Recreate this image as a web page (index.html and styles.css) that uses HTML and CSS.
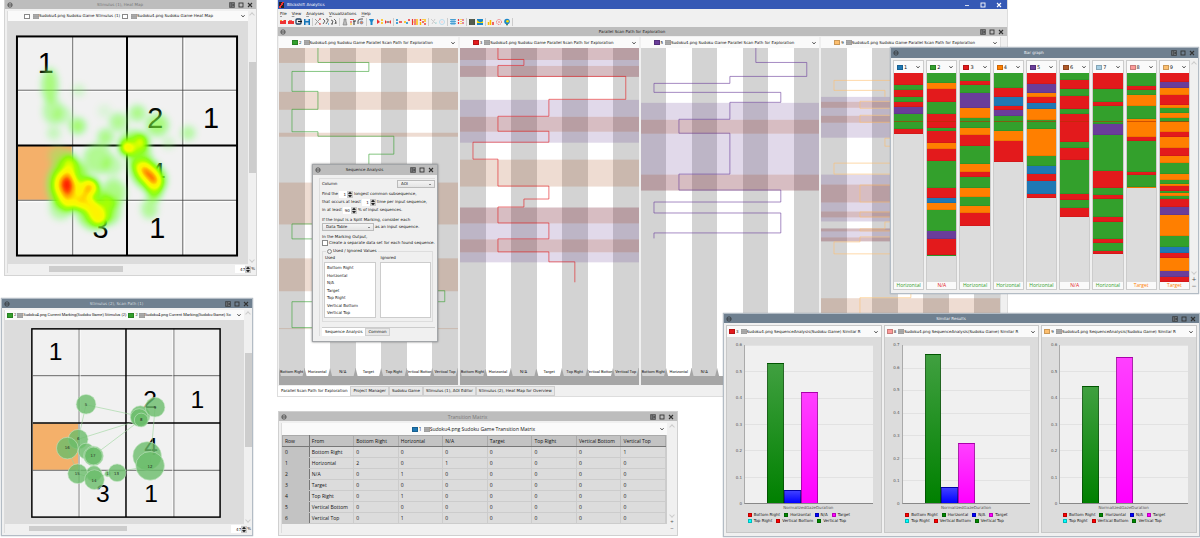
FILE: index.html
```html
<!DOCTYPE html>
<html lang="en">
<head>
<meta charset="utf-8">
<title>Blickshift Analytics</title>
<link rel="stylesheet" href="styles.css">
</head>
<body>
<svg class="defs" aria-hidden="true">
  <defs>
    <symbol id="i-menu" viewBox="0 0 6 6"><circle cx="3" cy="3" r="2.2" fill="none" stroke="currentColor" stroke-width=".6"/><path d="M1 3h4" stroke="currentColor" stroke-width=".7"/></symbol>
    <symbol id="i-pin" viewBox="0 0 6 6"><rect x=".2" y=".2" width="5.6" height="5.6" fill="currentColor" opacity=".8"/><path d="M1.8 1.2v3.6M3.2 1.500h1.600M3.200 3h1M3.200 4.500h1.600" stroke="#b4b9bf" stroke-width=".5"/></symbol>
    <symbol id="i-max" viewBox="0 0 6 6"><rect x="1" y="1" width="4" height="4" fill="none" stroke="currentColor" stroke-width=".9"/></symbol>
    <symbol id="i-close" viewBox="0 0 6 6"><path d="M1 1l4 4M5 1L1 5" stroke="currentColor" stroke-width="1.1"/></symbol>
    <symbol id="i-min" viewBox="0 0 6 6"><path d="M1 3.5h4" stroke="currentColor" stroke-width=".8"/></symbol>
    <symbol id="i-down" viewBox="0 0 6 6"><path d="M1.4 2.2L3 3.9l1.6-1.7" fill="none" stroke="currentColor" stroke-width=".9"/></symbol>
    <symbol id="i-data" viewBox="0 0 6 5"><rect width="6" height="5" fill="#9a9a9a"/><path d="M0 1.6h6M0 3.3h6M2 0v5M4 0v5" stroke="#bdbdbd" stroke-width=".4"/></symbol>
    <symbol id="i-spin" viewBox="0 0 6 7"><rect width="6" height="7" fill="#c9c9c9"/><path d="M3 .5L5 3H1zM3 6.5L1 4h4z" fill="#222"/></symbol>
  </defs>
</svg>

<main class="desktop">

  <section class="window main-window" aria-label="Blickshift Analytics">
    <header class="app-title"><span class="app-logo"></span><span class="grow">Blickshift Analytics</span>
      <button aria-label="Minimize"><svg><use href="#i-min"/></svg></button><button aria-label="Maximize"><svg><use href="#i-max"/></svg></button><button aria-label="Close"><svg><use href="#i-close"/></svg></button>
    </header>
    <nav class="menu"><button><u>F</u>ile</button><button><u>V</u>iew</button><button><u>A</u>nalyses</button><button><u>V</u>isualizations</button><button><u>H</u>elp</button></nav>
    <div class="toolbar" id="toolbar"></div>
    <header class="dock-title" data-title="Parallel Scan Path for Exploration"></header>
    <div class="lanes"><div class="lane-row" id="lanes"></div><div class="lane-gutter"></div></div>
    <nav class="doc-tabs"><button class="active">Parallel Scan Path for Exploration</button><button>Project Manager</button><button>Sudoku Game</button><button>Stimulus (1), AOI Editor</button><button>Stimulus (2), Heat Map for Overview</button></nav>
  </section>

  <section class="window heat-window">
    <header class="dock-title dim" data-title="Stimulus (1), Heat Map"></header>
    <div class="view">
      <div class="view-body">
        <div class="source center"><i class="swatch empty"></i><svg class="data"><use href="#i-data"/></svg><span>Sudoku4.png Sudoku Game Stimulus (1)</span><i class="swatch empty"></i><svg class="data"><use href="#i-data"/></svg><span>Sudoku4.png Sudoku Game Heat Map</span><button class="drop" aria-label="Data sources"><svg><use href="#i-down"/></svg></button></div>
        <svg class="canvas" viewBox="7 23 241 241">
          <defs><filter id="heat" filterUnits="userSpaceOnUse" x="7" y="23" width="241" height="241" color-interpolation-filters="sRGB">
            <feGaussianBlur stdDeviation="4"/>
            <feColorMatrix values="0 0 0 1 0  0 0 0 1 0  0 0 0 1 0  0 0 0 1 0"/>
            <feComponentTransfer>
              <feFuncR type="table" tableValues=".45 .48 .5 .5 .66 .95 1 1 1"/>
              <feFuncG type="table" tableValues="1 1 1 1 1 1 .95 .6 0"/>
              <feFuncB type="table" tableValues=".4 .35 .2 0 0 0 0 0 0"/>
              <feFuncA type="table" tableValues="0 .38 .65 .88 1 1 1 1 1"/>
            </feComponentTransfer></filter></defs>
          <rect x="16" y="37" width="221" height="220" fill="#f1f1f1"/>
          <rect x="17" y="147" width="54" height="54" fill="#f4b06a"/>
          <path d="M73 37v220M184 37v220M17 92h220M17 203h220" stroke="#fff"/>
          <path d="M72 37v220M182.500 37v220M17 91h220M17 201.500h220" stroke="#444" stroke-width=".8"/>
          <path d="M126.500 37v220M17 146.500h220" stroke="#000" stroke-width="2"/>
          <rect x="16" y="37" width="221" height="220" fill="none" stroke="#000" stroke-width="2"/>
          <g class="digits large"><text x="45" y="74">1</text><text x="155" y="129">2</text><text x="211" y="129">1</text><text x="157" y="184">4</text><text x="100" y="239">3</text><text x="157" y="239">1</text></g>
          <g filter="url(#heat)">
            <ellipse cx="49" cy="86" rx="8" ry="17" opacity=".24"/><ellipse cx="52" cy="112" rx="10" ry="13" opacity=".17"/><circle cx="62" cy="116" r="9" opacity=".12"/>
            <circle cx="78" cy="91" r="6" opacity=".1"/><circle cx="77" cy="127" r="8" opacity=".26"/><circle cx="53" cy="134" r="7" opacity=".12"/>
            <circle cx="104" cy="112" r="7" opacity=".06"/><circle cx="118" cy="123" r="9" opacity=".2"/><circle cx="105" cy="138" r="8" opacity=".22"/><ellipse cx="97" cy="160" rx="14" ry="15" opacity=".2"/><circle cx="112" cy="167" r="10" opacity=".14"/>
            <ellipse cx="113" cy="194" rx="12" ry="14" opacity=".22"/><ellipse cx="110" cy="212" rx="10" ry="14" opacity=".22"/><ellipse cx="58" cy="157" rx="10" ry="9" opacity=".14"/>
            <circle cx="137" cy="114" r="8" opacity=".22"/><circle cx="157" cy="126" r="11" opacity=".24"/><circle cx="188" cy="134" r="7" opacity=".18"/><circle cx="168" cy="144" r="6" opacity=".1"/>
            <ellipse cx="134" cy="144" rx="15" ry="12" opacity=".3"/><circle cx="126.500" cy="149" r="7" opacity=".64"/><circle cx="140" cy="142" r="6" opacity=".46"/>
            <ellipse cx="139" cy="158" rx="12" ry="14" opacity=".24"/><ellipse cx="148" cy="176" rx="20" ry="14" transform="rotate(40 148 176)" opacity=".42"/><ellipse cx="149" cy="176" rx="13" ry="7" transform="rotate(42 149 176)" opacity=".86"/><ellipse cx="154" cy="190" rx="8" ry="12" opacity=".38"/><ellipse cx="149" cy="210" rx="8" ry="10" opacity=".2"/>
            <ellipse cx="68" cy="186" rx="21" ry="27" opacity=".34"/><ellipse cx="69" cy="165" rx="7" ry="11" opacity=".38"/><ellipse cx="65" cy="186" rx="12" ry="16" opacity=".6"/><ellipse cx="66" cy="186" rx="7" ry="10" opacity=".95"/>
            <circle cx="69" cy="201" r="8" opacity=".5"/><circle cx="90" cy="188" r="8" opacity=".78"/><circle cx="80" cy="190" r="7" opacity=".36"/><circle cx="83" cy="202" r="9" opacity=".6"/><ellipse cx="95" cy="214" rx="8" ry="13" transform="rotate(-25 95 214)" opacity=".64"/><ellipse cx="94" cy="211" rx="18" ry="20" opacity=".3"/><circle cx="60" cy="210" r="11" opacity=".16"/>
          </g>
        </svg>
        <div class="hscroll"><i class="thumb"></i></div>
      </div>
      <div class="view-side"><div class="vscroll"><i class="thumb"></i></div></div>
      <label class="zoom"><input type="text" value="47" aria-label="Zoom"><svg><use href="#i-spin"/></svg>%</label>
    </div>
  </section>

  <section class="window path-window blue">
    <header class="dock-title dim" data-title="Stimulus (2), Scan Path (1)"></header>
    <div class="view">
      <div class="view-body">
        <div class="source"><i class="swatch" style="background:#33a02c"></i><b>2</b><svg class="data"><use href="#i-data"/></svg><span>Sudoku4.png Current Marking(Sudoku Game) Stimulus (2)</span><i class="swatch" style="background:#33a02c"></i><b>2</b><svg class="data"><use href="#i-data"/></svg><span>Sudoku4.png Current Marking(Sudoku Game) Sc</span><button class="drop" aria-label="Data sources"><svg><use href="#i-down"/></svg></button></div>
        <svg class="canvas" viewBox="3 319 242 207">
          <rect x="30" y="328" width="191" height="191" fill="#f1f1f1"/>
          <rect x="31" y="424" width="46" height="47" fill="#f4b06a"/>
          <path d="M78 328v191M174 328v191" stroke="#999" stroke-width="1.500"/>
          <path d="M31 375.500h190M31 471.500h190" stroke="#444" stroke-width=".8"/>
          <path d="M79 328v191M173 328v191" stroke="#fff" stroke-width=".8"/>
          <path d="M125.500 328v191M31 423.500h190" stroke="#000" stroke-width="1.500"/>
          <rect x="30" y="328" width="191" height="191" fill="none" stroke="#000" stroke-width="1.500"/>
          <g class="digits"><text x="54" y="360">1</text><text x="150" y="408">2</text><text x="198" y="408">1</text><text x="151" y="456">4</text><text x="102" y="504">3</text><text x="151" y="504">1</text></g>
          <path d="M85 405L141 417M85 405L77 440L141 420L92 457M155 408L150 467M66 449L77 475L93 480L107 475L150 467" stroke="#9bd49b" stroke-width=".6" fill="none"/>
          <g class="nodes"><circle cx="140" cy="416" r="10"/><circle cx="139" cy="418" r="9"/><circle cx="141" cy="420.500" r="7"/><circle cx="155" cy="407.500" r="10"/><circle cx="85" cy="404.500" r="10"/><circle cx="77" cy="440" r="10"/><circle cx="85" cy="452" r="8"/><circle cx="92.500" cy="457" r="10"/><circle cx="92.500" cy="457" r="9"/><circle cx="66" cy="449" r="11"/><circle cx="93" cy="475" r="8"/><circle cx="76.500" cy="475" r="10"/><circle cx="93.500" cy="481" r="10"/><circle cx="107" cy="475" r="3"/><circle cx="116.500" cy="474" r="9"/><circle cx="147" cy="457" r="14.500"/><circle cx="150" cy="467" r="14.500"/></g>
          <g class="node-text"><text x="85" y="406">5</text><text x="155" y="409">9</text><text x="141" y="422">8</text><text x="77" y="441">6</text><text x="66" y="450">16</text><text x="92" y="458">17</text><text x="76" y="476">15</text><text x="93" y="483">14</text><text x="107" y="476">1</text><text x="116" y="476">13</text><text x="150" y="469">12</text></g>
        </svg>
        <div class="hscroll"><i class="thumb"></i></div>
      </div>
      <div class="view-side"><div class="vscroll"><i class="thumb"></i></div></div>
      <label class="zoom"><input type="text" value="47" aria-label="Zoom"><svg><use href="#i-spin"/></svg>%</label>
    </div>
  </section>

  <section class="window sequence-window">
    <header class="dock-title" data-title="Sequence Analysis"></header>
    <form class="sequence">
      <div class="row spread"><label for="column">Column</label><select id="column"><option>AOI</option></select></div>
      <label class="row first">Find the <span class="spin"><input type="text" value="1"><svg><use href="#i-spin"/></svg></span> longest common subsequence,</label>
      <label class="row">that occurs at least <span class="spin"><input type="text" value="1"><svg><use href="#i-spin"/></svg></span> time per input sequence,</label>
      <label class="row">in at least <span class="spin"><input type="text" value="90"><svg><use href="#i-spin"/></svg></span>% of input sequences.</label>
      <label class="line top" for="source">If the Input is a Split Marking, consider each</label>
      <div class="row"><select id="source"><option>Data Table</option></select><span>as an input sequence.</span></div>
      <div class="line top">In the Marking Output,</div>
      <label class="line check"><input type="checkbox">Create a separate data set for each found sequence.</label>
      <fieldset>
        <legend><button type="button" class="fold" aria-label="Collapse"></button>Used / Ignored Values</legend>
        <div class="lists">
          <div><div class="list-title">Used</div><ul><li>Bottom Right</li><li>Horizontal</li><li>N/A</li><li>Target</li><li>Top Right</li><li>Vertical Bottom</li><li>Vertical Top</li></ul></div>
          <div><div class="list-title">Ignored</div><ul></ul></div>
        </div>
      </fieldset>
      <nav class="form-tabs"><button type="button" class="active">Sequence Analysis</button><button type="button">Common</button></nav>
    </form>
  </section>

  <section class="window matrix-window">
    <header class="dock-title dim" data-title="Transition Matrix"></header>
    <div class="view">
      <div class="view-body">
        <div class="source center"><i class="swatch" style="background:#1f78b4"></i><b>1</b><svg class="data"><use href="#i-data"/></svg><span>Sudoku4.png Sudoku Game Transition Matrix</span><button class="drop" aria-label="Data sources"><svg><use href="#i-down"/></svg></button></div>
        <div class="table-wrap"><table id="matrix"></table></div>
        <div class="hscroll"></div>
      </div>
      <div class="view-side"><div class="vscroll"></div><span class="pm">+</span><span class="pm">−</span></div>
    </div>
  </section>

  <section class="window bar-window blue">
    <header class="dock-title" data-title="Bar graph"></header>
    <div class="bar-body"><div class="bar-cols" id="bars"></div><div class="view-side"><div class="vscroll"></div><span class="pm">+</span><span class="pm">−</span></div></div>
  </section>

  <section class="window similar-window blue">
    <header class="dock-title" data-title="Similar Results"></header>
    <div class="charts" id="charts"></div>
  </section>
</main>
<script src="app.js"></script>
</body>
</html>
```

FILE: styles.css
```css
* { box-sizing: border-box; }
body { margin: 0; background: #fff; color: #111; font-family: "DejaVu Sans", "Open Sans", sans-serif; font-size: 4px; line-height: 6px; white-space: nowrap; }
button, input, select { font: inherit; color: inherit; margin: 0; padding: 0; border: 0; background: none; border-radius: 0; appearance: none; min-width: 0; }
button { cursor: pointer; }
svg { display: block; flex: none; }
u { text-decoration-thickness: 1px; text-decoration-color: #999; }
.defs { position: absolute; width: 0; height: 0; }
.grow { flex: 1; }

.desktop { position: relative; min-height: 538px; overflow: hidden; }
.window { position: absolute; left: calc(var(--x) / 12 * 1%); width: calc(var(--w) / 12 * 1%); display: flex; flex-direction: column; background: #f0f0f0; }
.main-window { --x: 277; --w: 731; top: 0; height: 397px; border: 1px solid #ddd; border-top: 0; }
.heat-window { --x: 4; --w: 253; top: 0; height: 276px; border: 1px solid #d4d4d4; border-top: 0; }
.path-window { --x: 1; --w: 252; top: 298px; height: 238px; }
.sequence-window { --x: 312; --w: 126; top: 164px; height: 178px; border: 1px solid #a2a5a8; box-shadow: 0 0 2px #777; }
.matrix-window { --x: 278; --w: 400; top: 411px; height: 125px; border: 1px solid #d0d0d0; }
.bar-window { --x: 890; --w: 309; top: 47px; height: 247px; }
.similar-window { --x: 723; --w: 477; top: 313px; height: 224px; }
.blue { border: 1px solid #b3bcc5; box-shadow: 0 0 1px #8f9ba7; }

.dock-title { display: flex; align-items: center; flex: none; height: 9px; padding: 0 2px; background: #bdbdbd; color: #222; }
.dock-title .name { flex: 1; text-align: center; }
.dock-title button { width: 9px; color: #333; display: grid; place-items: center; }
.dock-title svg { width: 6px; height: 6px; }
.dim .name { color: #777; }
.blue .dock-title { background: #6f8090; }
.blue .dock-title .name { color: #eef2f5; }
.blue .dock-title.dim .name { color: #d3d9df; }
.sequence-window .dock-title { height: 10px; }
.bar-window .dock-title { height: 10px; }

.app-title { display: flex; align-items: center; height: 9px; flex: none; background: #3559b5; color: #fff; padding-left: 1px; }
.app-title button { width: 16px; display: grid; place-items: center; }
.app-title svg { width: 6px; height: 6px; }
.app-logo { width: 5px; height: 6px; margin-right: 3px; background: linear-gradient(120deg, #222 35%, #e33 35% 60%, #222 60%); }
.menu { display: flex; gap: 5px; padding: 1px 2px 0; height: 8px; flex: none; }
.toolbar { display: flex; align-items: center; height: 9px; flex: none; padding: 0 1px; margin-bottom: 1px; }
.toolbar div { display: flex; padding-right: 1px; margin-right: 1px; border-right: 1px solid #ccc; }
.toolbar button { width: 8px; height: 8px; display: grid; place-items: center; }
.toolbar svg { width: 8px; height: 8px; }

.source { display: flex; align-items: center; flex: none; background: #fafafa; height: 10px; padding-left: 2px; overflow: hidden; }
.source.center::before { content: ""; flex: 1; }
.source b { font-weight: 400; margin: 0 2px 0 1px; }
.swatch { width: 6px; height: 5px; border: 1px solid #0003; flex: none; }
.swatch.empty { background: #fff; border-color: #888; margin-right: 3px; }
.data { width: 6px; height: 5px; }
.source span { margin-right: 2px; }
.source .clip { overflow: hidden; min-width: 0; flex: 1; }
.heat-window .source::before { flex: none; width: 14px; }
.path-window .source { font-family: Roboto, "Open Sans", sans-serif; }
.path-window .source b { margin-right: 1px; }
.drop { margin-left: auto; width: 10px; flex: none; color: #333; display: grid; place-items: center; }
.source.center .drop { flex: 1; justify-items: end; padding-right: 2px; }
.drop svg { width: 6px; height: 6px; }

.lanes { display: flex; flex: 1; min-height: 0; margin: 1px 0 1px 1px; }
.lane-row { flex: 1; display: flex; gap: 2px; min-width: 0; }
.lane-gutter { width: 7px; flex: none; border-left: 1px solid #ddd; }
.lane { flex: 1 1 0; min-width: 0; display: flex; flex-direction: column; }
.lane .source { padding-left: 13px; height: 11px; }
.lane-plot { flex: 1; min-height: 0; display: flex; flex-direction: column; background: repeating-linear-gradient(90deg, #d3d3d3 0 calc(100% / 7), #fff calc(100% / 7) calc(200% / 7)); }
.lane-plot svg { width: 100%; height: 0; flex: 1; }
.lane-labels { display: grid; grid-template-columns: repeat(7, minmax(0, 1fr)); background: #a6a6a6; padding-bottom: 9px; font-family: Roboto, "Open Sans", sans-serif; }
.lane-labels span { height: 8px; line-height: 8px; background: #d3d3d3; display: flex; justify-content: center; clip-path: polygon(0 0, 100% 0, calc(100% - 2px) 100%, 2px 100%); }
.lane-labels span:nth-child(even) { background: #fff; }
.doc-tabs { display: flex; height: 10px; flex: none; }
.doc-tabs button, .form-tabs button { padding: 0 2px; border: 1px solid #cfcfcf; background: #e8e8e8; }
.doc-tabs .active, .form-tabs .active { background: #fff; border-color: #fff; }

.view { position: relative; flex: 1; min-height: 0; display: flex; margin: 2px 0 2px 2px; }
.view-body { flex: 1; min-width: 0; display: flex; flex-direction: column; border-left: 1px solid #ddd; }
.canvas { width: 100%; flex: 1; min-height: 0; background: #dcdcdc; }
.hscroll { height: 9px; flex: none; padding: 2px 0; }
.thumb { display: block; background: #cdcdcd; }
.hscroll .thumb { height: 6px; width: 31%; margin-left: 17%; }
.path-window .hscroll .thumb { width: 41%; margin-left: 10%; height: 5px; }
.view-side { width: 8px; flex: none; display: flex; flex-direction: column; align-items: center; color: #555; }
.vscroll { flex: 1; width: 7px; display: flex; flex-direction: column; align-items: center; color: #999; }
.vscroll .thumb { width: 7px; height: 44%; margin: auto 0; }
.vscroll::before, .vscroll::after { content: ""; width: 3px; height: 3px; border: solid #ccc; border-width: 1px 0 0 1px; transform: rotate(45deg); margin: 2px; }
.vscroll::after { transform: rotate(225deg); margin-top: auto; }
.heat-window .view-side, .path-window .view-side { padding-bottom: 9px; }
.zoom { position: absolute; right: 1px; bottom: 0; display: flex; align-items: center; height: 8px; }
.zoom input { width: 10px; background: #fff; text-align: right; height: 8px; }
.zoom svg { width: 6px; height: 7px; }
.pm { height: 7px; font-size: 6px; }
.digits { font: 25px "Liberation Sans", Arial, sans-serif; text-anchor: middle; }
.digits.large { font-size: 29px; }
.nodes circle { fill: #6abd6a; fill-opacity: .8; stroke: #c5e6c5; stroke-width: .6; }
.node-text { font-size: 4px; text-anchor: middle; fill: #222; }

.sequence { flex: 1; display: flex; flex-direction: column; margin: 3px 2px 5px 6px; padding: 1px 0 0 2px; border: 1px solid #ddd; border-width: 1px 0 0 1px; }
.row { display: flex; align-items: center; height: 8px; gap: 1px; }
.spread { justify-content: space-between; }
.first { margin-top: 2px; }
.spin { display: flex; }
.spin input { width: 8px; background: #fff; text-align: right; padding-right: 1px; height: 7px; }
.spin svg { width: 6px; height: 7px; }
.sequence select { height: 8px; border: 1px solid #bbb; background: conic-gradient(from -45deg at 50% 100%, #666 90deg, #0000 0) right 3px center / 3px 2px no-repeat, linear-gradient(#f4f4f4, #e4e4e4); background: linear-gradient(#888, #888) right 3px center / 2px 1px no-repeat, linear-gradient(#f4f4f4, #e4e4e4); width: 38px; padding: 0 3px; }
.sequence #source { width: 52px; }
.line { height: 6px; display: block; }
.line.top { margin-top: 3px; }
.check { display: flex; align-items: center; }
.check input { width: 6px; height: 6px; border: 1px solid #888; background: #fff; margin-right: 1px; flex: none; }
fieldset { margin: 2px 2px 0 0; padding: 1px 1px 3px; border: 1px solid #ddd; min-width: 0; }
legend { display: flex; align-items: center; gap: 1px; padding: 0 1px; margin-left: 2px; }
.fold { width: 5px; height: 5px; border: 1px solid #888; border-radius: 50%; }
.lists { display: grid; grid-template-columns: 1fr 1fr; gap: 4px; }
.list-title { padding-left: 1px; height: 7px; }
ul { list-style: none; margin: 0; padding: 1px 2px; height: 56px; background: #fff; border: 1px solid #ccc; display: flex; flex-direction: column; justify-content: space-between; }
li { height: 7px; line-height: 7px; }
.form-tabs { display: flex; height: 9px; margin-top: auto; border-top: 1px solid #ccc; }

.matrix-window { font-size: 5px; font-family: "Open Sans", sans-serif; }
.matrix-window .source { height: 12px; }
.matrix-window .hscroll { height: 9px; }
.table-wrap { flex: 1; min-height: 0; overflow: hidden; background: #dcdcdc; border-right: 1px solid #ccc; }
table { width: 100%; border-collapse: collapse; table-layout: fixed; }
th, td { height: 11px; padding: 0 2px; font-weight: 400; text-align: left; border: 1px solid #ccc; overflow: hidden; }
th { background: #c3c3c3; border-color: #aaa; }
thead th { border-bottom: 1px solid #777; }
th:first-child { width: 7%; border-right: 1px solid #777; }
tbody th { border-color: #c3c3c3; }
.matrix-window .view-side { width: 10px; }

.bar-body { flex: 1; min-height: 0; display: flex; padding: 2px 0 3px 2px; }
.bar-cols { flex: 1; display: grid; grid-template-columns: repeat(9, minmax(0, 1fr)); gap: 2px; }
.bar-col { display: flex; flex-direction: column; border: 1px solid #ccc; background: #fafafa; min-width: 0; }
.bar-col .source { height: 12px; padding-left: 3px; }
.bar-col b { font-size: 5px; }
.track { position: relative; flex: 1; background: #dcdcdc; min-height: 0; }
.seg { border-bottom: 1px solid #0001; }
.track::after { content: ""; position: absolute; left: 0; right: 0; top: 23%; height: 1px; background: #b2300099; }
.result { text-align: center; font-family: "Open Sans", sans-serif; font-size: 5px; height: 7px; line-height: 7px; }

.charts { flex: 1; min-height: 0; display: grid; grid-template-columns: repeat(3, minmax(0, 1fr)); gap: 2px; padding: 2px 2px 3px; }
.chart { display: flex; flex-direction: column; background: #dcdcdc; border: 1px solid #c8c8c8; min-width: 0; }
.chart .source { height: 11px; }
.chart .source .clip { margin-right: 3px; }
.plot-row { flex: 1; display: flex; padding: 8px 8px 0 0; }
.ticks { width: 17px; display: flex; flex-direction: column; justify-content: space-between; text-align: right; padding-right: 2px; margin: -3px 0; color: #555; }
.plot { position: relative; flex: 1; background: #f0f0f0; border-left: 1px solid #aaa; border-bottom: 1px solid #888; display: flex; align-items: flex-end; padding-left: 15%; }
.grid { position: absolute; inset: 0; display: flex; flex-direction: column; }
.grid i { flex: 1; border-top: 1px solid #e2e2e2; }
.bar { position: relative; width: 16%; border: 1px solid #0005; border-bottom: 0; }
.axis { text-align: center; margin-left: 17px; color: #555; margin-right: 8px; line-height: 7px; }
.legend { display: grid; justify-content: center; margin: 1px 10px 8px 0; }
.legend div { display: flex; gap: 4px; }
.legend span { display: flex; align-items: center; gap: 2px; height: 6px; }
.legend i { width: 4px; height: 4px; border: 1px solid #0004; }
```

FILE: app.js
```js
const use = (id, cls = "") => `<svg class="${cls}"><use href="#${id}"/></svg>`;
const drop = `<button class="drop" aria-label="Data sources">${use("i-down")}</button>`;

document.querySelectorAll(".dock-title").forEach(t => {
  t.innerHTML = use("i-menu") + `<span class="name">${t.dataset.title}</span>` +
    `<button aria-label="Pin">${use("i-pin")}</button><button aria-label="Maximize">${use("i-max")}</button><button aria-label="Close">${use("i-close")}</button>`;
});

const icons = [
  ['<path d="M1 3h3l1-1h2v4H1z" fill="#e33"/><path d="M1 2h2v1H1z" fill="#f8a030"/>', '<path d="M1 3h6v3H1z" fill="#e33"/><path d="M2 2h3v1H2z" fill="#e66"/>', '<rect x="1" y="1" width="5" height="5" rx="1" fill="none" stroke="#246" stroke-width="1.3"/><path d="M3 3.500h4" stroke="#111" stroke-width="1.2"/>', '<rect x="1" y="1" width="6" height="6" fill="#1474b8"/><path d="M2.500 1h3v2h-3zM2.500 4.500h3V7h-3z" fill="#cde"/>'],
  ['<path d="M1 1l5 5M6 1L4 3M3 4L1 7" stroke="#888" stroke-width=".8"/><path d="M5 1h2M5 6h2" stroke="#e33"/>', '<path d="M1 1l2 2-2 3M4 1h2v2L4 6" fill="none" stroke="#666"/><path d="M6 6h1" stroke="#18c"/>', '<path d="M1 2l2 1-1 3M4 1l2 2-1 3M5 5h2M1 6h2" fill="none" stroke="#555" stroke-width=".9"/>'],
  ['<path d="M3 1h2v2l1 4H2l1-4z" fill="#bbb" stroke="#777" stroke-width=".6"/>', '<path d="M1 1.500h4M1 4h2" stroke="#e33" stroke-width="1.2"/><path d="M4 3h3M5 3v4" stroke="#333"/><path d="M1 6h2" stroke="#fb0"/>', '<path d="M1 6V3q0-2 3-2h2" fill="none" stroke="#555"/><circle cx="4.500" cy="4.500" r="1.500" fill="#e85" stroke="#48c" stroke-width=".6"/>'],
  ['<path d="M1 1h5L4.500 4v3h-2V4z" fill="#1a86c8"/>', '<path d="M1 1l3 3-3 2z" fill="#e33"/><path d="M5 2h2M5 5h2" stroke="#fb0" stroke-width="1.5"/>', '<path d="M1 2l2 2-2 2z" fill="#e33"/><path d="M7 2L5 4l2 2z" fill="#e33"/><path d="M4 3v2" stroke="#333"/>'],
  ['<path d="M1 2h2M1 5h2" stroke="#18c" stroke-width="1.500"/><path d="M4 4h3" stroke="#e33" stroke-width="1.500"/>', '<path d="M1 4h2" stroke="#fb0" stroke-width="1.500"/><path d="M3 5h2" stroke="#18c" stroke-width="1.500"/><path d="M5 2h2" stroke="#e33" stroke-width="1.500"/>', '<path d="M1.500 1v6M4 1v6" stroke="#e33" stroke-width="1.200"/><path d="M6 1v6M2.500 4h1" stroke="#fb0" stroke-width="1.400"/>', '<path d="M1.500 1v2M4 3v2M6 5v2" stroke="#e33" stroke-width="1.400"/><path d="M1.500 4v3M4 1v1M6 1v3" stroke="#fb0" stroke-width="1.400"/>'],
  ['<path d="M1 1l5 5M5 1L2 6" stroke="#ccc"/><path d="M5 5h2" stroke="#add"/>', '<circle cx="4" cy="4" r="2.500" fill="none" stroke="#bde"/><path d="M3 4h2" stroke="#fcc"/>'],
  ['<rect x="1" y="1" width="6" height="6" fill="#cde8f8"/><path d="M1 1.500h6M1 3.500h6M1 5.500h6M3 1v6M5 1v6" stroke="#2b8fca" stroke-width=".7"/>', '<path d="M1.500 1v6" stroke="#e33" stroke-width="1.200" stroke-dasharray="2 1"/><path d="M4 1v6" stroke="#fb0" stroke-width="1.200" stroke-dasharray="1 1"/><path d="M6 1v6" stroke="#d46" stroke-width="1.200" stroke-dasharray="2 1"/>'],
  ['<rect x="1" y="1" width="6" height="6" fill="#495643"/><path d="M3 1v6M5 1v6" stroke="#777" stroke-width=".5"/>', '<rect x="1" y="1" width="6" height="6" fill="#1a86c8"/><path d="M1 2q3 4 6 1v2H1z" fill="#fd0"/>'],
  ['<path d="M1.500 7V4" stroke="#fb0" stroke-width="1.500"/><path d="M3.500 7V2" stroke="#fb0" stroke-width="1.500"/><path d="M6 7V4" stroke="#e33" stroke-width="1.500"/>', '<circle cx="4" cy="4" r="2.500" fill="none" stroke="#e55" stroke-dasharray="1 1"/><path d="M3 4h2" stroke="#e77"/>', '<circle cx="4" cy="3.500" r="2.800" fill="#1a86c8"/><circle cx="4.500" cy="3.300" r="1.300" fill="#fd0"/><path d="M3 6l1 2 1-2" fill="#264"/>']
];
document.getElementById("toolbar").innerHTML = icons.map(g =>
  `<div>${g.map(i => `<button aria-label="Tool"><svg viewBox="0 0 8 8">${i}</svg></button>`).join("")}</div>`).join("");

const aois = ["Bottom Right", "Horizontal", "N/A", "Target", "Top Right", "Vertical Bottom", "Vertical Top"];
const tones = { t: "rgba(170,80,30,.2)", r: "rgba(122,38,52,.3)", l: "rgba(105,65,150,.2)" };
const lanes = [
  { id: 2, fill: "#33a02c", x: 279, bands: "t48-63 t92-110 t133-137 t183-225 t259-292 t329-330",
    path: "M318 48V62.500H369V71.500H292V91.500H318V109.500H292V132H318V136.500H394V154.500H369V224.500H292V239.500H369V291.500H445V302.500H292V328.500H369" },
  { id: 3, fill: "#e31a1c", x: 460, bands: "r48-60 l60-66 r66-77 l100-117 r117-132 l132-143 t160-187 r208-224 l224-240 r240-253 l253-263",
    path: "M498 48V59.500H524V65.500H498V76.500H626V99.500H549V116.500H498V131.500H549V142.500H473V159.500H498V186.500H549V199.500H524V207.500H498V223.500H549V239.500H498V252.500H549V262.500H575V283" },
  { id: 5, fill: "#6a3d9a", x: 641, bands: "l103-120 r120-134 l134-175 r175-191",
    path: "M756 48V62.500H807V76.500H730V83.500H654V92.500H781V102.500H730V119.500H679V133.500H730V174.500H679V190.500H781V202.500H654V213.500H781V233.500H654V239" },
  { id: 9, fill: "#fdbf6f", x: 821, bands: "l97-102 r102-108 l108-116 r116-123 l123-138 l175-185 r185-203 l203-212 r212-218 l218-222 r229-232 l232-238 r238-242 t299-330",
    path: "M911 80.500H834V90.500H885V97M911 101.500H860V108.500H911V115.500H860V122.500H911V138.500H885V146.500H911V163.500H834V174.500H911V185.500H860V202.500H911V212.500H860V217.500H911V222.500H885V229.500H860V231.500H911V237.500H860V242.500H834V254.500H911V298.500H860V330" }
];
document.getElementById("lanes").innerHTML = lanes.map(l => `<div class="lane">
  <div class="source"><i class="swatch" style="background:${l.fill}"></i><b>${l.id}</b>${use("i-data", "data")}<span>Sudoku4.png Sudoku Game Parallel Scan Path for Exploration</span>${drop}</div>
  <div class="lane-plot"><svg viewBox="${l.x} 48 179 321" preserveAspectRatio="none">${l.bands.split(" ").map(b => {
    const [a, z] = b.slice(1).split("-").map(Number);
    return `<rect x="${l.x}" y="${a}" width="180" height="${z - a}" fill="${tones[b[0]]}"/>`;
  }).join("")}<path d="${l.path}" fill="none" stroke="${l.fill}" stroke-opacity=".6"/></svg>
  <div class="lane-labels">${aois.map(a => `<span>${a}</span>`).join("")}</div></div></div>`).join("");

const counts = [[0,0,0,0,0,0,1],[2,0,1,0,0,0,0],[0,1,0,0,0,0,0],[0,0,0,0,0,0,0],[0,1,0,0,0,0,0],[0,0,0,0,0,0,0],[0,1,0,0,0,0,0]];
document.getElementById("matrix").innerHTML = `<thead><tr>${["Row", "From", ...aois].map(h => `<th>${h}</th>`).join("")}</tr></thead><tbody>` +
  counts.map((r, i) => `<tr><th>${i}</th><td>${aois[i]}</td>${r.map(c => `<td>${c}</td>`).join("")}</tr>`).join("") + "</tbody>";

const palette = { R: "#e31a1c", G: "#33a02c", O: "#ff7f00", P: "#6a3d9a", B: "#1f78b4" };
const kinds = { G: "Horizontal", R: "N/A", O: "Target" };
const columns = [
  ["#1f78b4", "G", "R36 G52 R73 G86 R103 P125 G170 R185"],
  ["#33a02c", "R", "G30 O48 R87 G123 R166 G176 R210 O228 R264 G346 R376 B393 O413 G477 P500 R549 G552"],
  ["#e31a1c", "G", "G25 R37 G59 P104 O137 G165 O187 R219 G273 O299 R313 G345 O375 G402 O422 R461"],
  ["#ff7f00", "G", "G44 R73 B99 R112 P130 G174 O205 R268"],
  ["#6a3d9a", "G", "R32 P59 O71 R90 B109 O142 G169 O250 G281 B304 R325 B364 R376"],
  ["#b15928", "R", "G21 R47 G70 R108 G123 R207 G225 R262 G364 R381 G407 R435"],
  ["#a6cee3", "G", "R49 G86 R99 G155 P188 G294 R347 G366 R378 G434 R450 G499 R511 G535 R546"],
  ["#fb9a99", "O", "G39 R52 G65 O99 G139 O193 R206 G297 R307 G344 O347"],
  ["#fdbf6f", "O", "R28 P44 O66 R97 O106 G121 O135 G149 O178 R193 O227 R249 O271 G304 O323 G334 O342 R355 G361 O372 G380 R404 P427 O492 G524 B542 R556 O597 P615 R629"]
];
document.getElementById("bars").innerHTML = columns.map(([c, k, data], i) => {
  let from = 0;
  const segs = data.split(" ").map(s => {
    const to = +s.slice(1), h = (to - from) / 6.29;
    from = to;
    return `<div class="seg" style="height:${h}%;background:${palette[s[0]]}"></div>`;
  }).join("");
  return `<div class="bar-col"><div class="source"><i class="swatch" style="background:${c}"></i><b>${i + 1}</b>${drop}</div><div class="track">${segs}</div><div class="result" style="color:${palette[k]}">${kinds[k]}</div></div>`;
}).join("");

const charts = [[3, "#e31a1c", 6, .53, .05, .42], [8, "#fb9a99", 7, .66, .072, .267], [9, "#fdbf6f", 6, .446, 0, .555]];
const fills = ["linear-gradient(#40a040,#008000)", "linear-gradient(#4040ff,#0000ff)", "linear-gradient(#ff40ff,#ff00ff)"];
const key = [[["Bottom Right", "#f00"], ["Horizontal", "#080"], ["N/A", "#00f"], ["Target", "#f0f"]], [["Top Right", "#0ff"], ["Vertical Bottom", "#f00"], ["Vertical Top", "#080"]]];
document.getElementById("charts").innerHTML = charts.map(([id, c, max, ...v]) => `<div class="chart">
  <div class="source"><i class="swatch" style="background:${c}"></i><b>${id}</b>${use("i-data", "data")}<span class="clip">Sudoku4.png SequenceAnalysis(Sudoku Game) Similar R</span>${drop}</div>
  <div class="plot-row"><div class="ticks">${Array.from({ length: max + 1 }, (_, i) => `<span>${i === max ? 0 : "0." + (max - i)}</span>`).join("")}</div>
  <div class="plot"><div class="grid">${"<i></i>".repeat(max)}</div>${v.map((n, i) => `<div class="bar" style="height:${n / max * 1000}%;background:${fills[i]};${n ? "" : "visibility:hidden"}"></div>`).join("")}</div></div>
  <div class="axis">NormalizedGazeDuration</div>
  <div class="legend">${key.map(r => `<div>${r.map(([n, f]) => `<span><i style="background:${f}"></i>${n}</span>`).join("")}</div>`).join("")}</div></div>`).join("");
```
